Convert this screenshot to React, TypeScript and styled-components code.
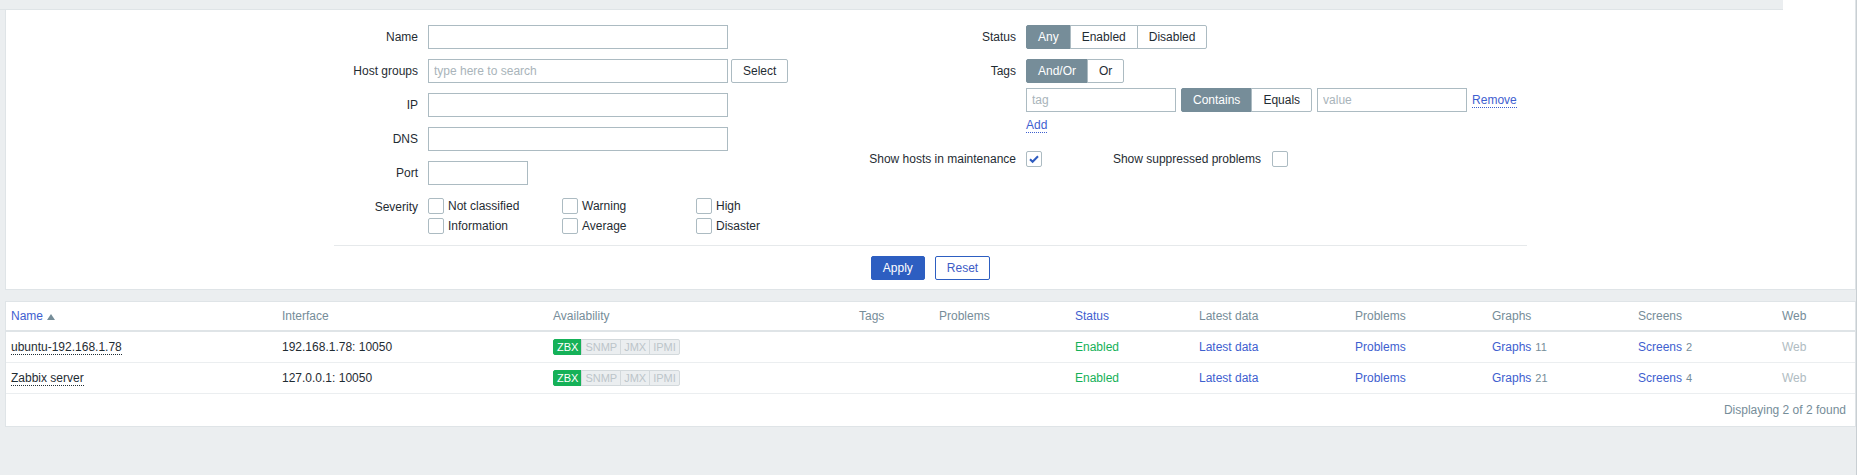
import { createGlobalStyle, styled } from "styled-components";

const GlobalStyle = createGlobalStyle`
  html, body { margin: 0; padding: 0; }
  body {
    font-family: "Liberation Sans", Arial, sans-serif;
    font-size: 12px;
    color: #1f2c33;
    background: #fff;
  }
  * { box-sizing: border-box; }
`;

const colors = {
  bg: "#ebeef0",
  border: "#dfe4e7",
  inputBorder: "#acbbc2",
  text: "#1f2c33",
  muted: "#768d99",
  link: "#3e60cf",
  apply: "#2d5ec1",
  green: "#15b158",
};

// layout shells
const Screen = styled.div`
  display: flex;
  width: 1868px;
  height: 475px;
  overflow: hidden;
  background: #fff;
`;
const Main = styled.main`
  width: 1856px;
  flex-shrink: 0;
  display: flex;
  flex-direction: column;
  background: ${colors.bg};
`;
const Gutter = styled.div`
  flex: 1;
  background: #fff;
  border-left: 1px solid #c9cfd3;
`;
const TopStrip = styled.div`
  display: flex;
  height: 10px;
`;
const TopBar = styled.div`
  width: 1783px;
  background: ${colors.bg};
  border-bottom: 1px solid ${colors.border};
`;
const TopFill = styled.div`
  flex: 1;
  background: #fff;
  border-right: 1px solid ${colors.border};
`;

// filter
const FilterPanel = styled.section`
  margin-left: 5px;
  padding: 15px 0 9px;
  background: #fff;
  border: 1px solid ${colors.border};
  border-top: 0;
`;
const FilterForm = styled.div`
  width: 1193px;
  margin: 0 auto;
  display: grid;
  grid-template-columns: 599px 594px;
  align-items: start;
  padding-bottom: 9px;
  border-bottom: 1px solid #e6e9eb;
`;
const FormColumn = styled.div<{ $labelW: number }>`
  display: grid;
  grid-template-columns: ${({ $labelW }) => $labelW}px 1fr;
  row-gap: 10px;
  align-items: start;
`;
const Label = styled.div`
  height: 24px;
  display: flex;
  align-items: center;
  justify-content: flex-end;
  padding-right: 10px;
  white-space: nowrap;
`;
const Field = styled.div`
  display: flex;
  align-items: center;
  min-height: 24px;
`;
const FieldStack = styled.div`
  display: flex;
  flex-direction: column;
  gap: 5px;
`;
const Row = styled.div`
  display: flex;
  align-items: center;
  gap: 5px;
`;
const TextInput = styled.input<{ $w?: number }>`
  width: ${({ $w }) => $w ?? 300}px;
  height: 24px;
  padding: 0 5px;
  border: 1px solid ${colors.inputBorder};
  border-radius: 0;
  font: inherit;
  color: ${colors.text};
  background: #fff;
  outline: none;
  &::placeholder { color: #a9b4ba; }
`;
const Button = styled.button<{ $variant?: "plain" | "primary" | "outline" }>`
  height: 24px;
  padding: 0 11px;
  font: inherit;
  line-height: 22px;
  border-radius: 2px;
  cursor: pointer;
  border: 1px solid ${({ $variant }) => ($variant && $variant !== "plain" ? colors.apply : colors.inputBorder)};
  background: ${({ $variant }) => ($variant === "primary" ? colors.apply : "#fff")};
  color: ${({ $variant }) => ($variant === "primary" ? "#fff" : $variant === "outline" ? "#3d5cc6" : colors.text)};
`;
const SelectButton = styled(Button)`
  margin-left: 3px;
`;
const Segmented = styled.div`
  display: inline-flex;
  height: 24px;
`;
const Segment = styled.span<{ $on?: boolean }>`
  display: flex;
  align-items: center;
  padding: 0 11px;
  border: 1px solid ${({ $on }) => ($on ? "#768d99" : colors.inputBorder)};
  margin-left: -1px;
  background: ${({ $on }) => ($on ? "#768d99" : "#fff")};
  color: ${({ $on }) => ($on ? "#fff" : colors.text)};
  &:first-child { margin-left: 0; border-radius: 2px 0 0 2px; }
  &:last-child { border-radius: 0 2px 2px 0; }
`;
const Link = styled.a<{ $dark?: boolean }>`
  color: ${({ $dark }) => ($dark ? colors.text : colors.link)};
  text-decoration: none;
  border-bottom: 1px dotted ${({ $dark }) => ($dark ? colors.text : colors.link)};
  cursor: pointer;
`;
const PlainLink = styled.a`
  color: ${colors.link};
  text-decoration: none;
`;
const AddRow = styled.div`
  height: 24px;
  margin-top: -4px;
  display: flex;
  align-items: center;
`;
const Box = styled.span`
  width: 16px;
  height: 16px;
  flex-shrink: 0;
  display: inline-flex;
  align-items: center;
  justify-content: center;
  border: 1px solid ${colors.inputBorder};
  border-radius: 2px;
  background: #fff;
`;
const SubLabel = styled.span`
  width: 230px;
  padding-right: 11px;
  text-align: right;
  white-space: nowrap;
`;
const SeverityGrid = styled.div`
  display: grid;
  grid-template-columns: repeat(3, 134px);
  grid-template-rows: repeat(2, 20px);
  grid-auto-flow: column;
  padding-top: 1px;
`;
const CheckItem = styled.label`
  display: flex;
  align-items: center;
  gap: 4px;
  white-space: nowrap;
`;
const ButtonBar = styled.div`
  display: flex;
  justify-content: center;
  gap: 10px;
  margin-top: 10px;
`;

// results table
const TablePanel = styled.section`
  margin: 11px 0 0 5px;
  background: #fff;
  border: 1px solid ${colors.border};
`;
const Table = styled.table`
  width: 100%;
  table-layout: fixed;
  border-collapse: collapse;
`;
const Th = styled.th<{ $link?: boolean }>`
  text-align: left;
  font-weight: normal;
  padding: 7px 5px;
  line-height: 14px;
  color: ${({ $link }) => ($link ? colors.link : colors.muted)};
  border-bottom: 2px solid ${colors.border};
  white-space: nowrap;
`;
const Td = styled.td`
  padding: 8px 5px;
  line-height: 14px;
  border-bottom: 1px solid ${colors.bg};
  white-space: nowrap;
`;
const StatusText = styled.span`
  color: ${colors.green};
`;
const Count = styled.span`
  margin-left: 4px;
  font-size: 11px;
  color: ${colors.muted};
`;
const Muted = styled.span`
  color: #b0bcc2;
`;
const BadgeGroup = styled.div`
  display: flex;
  align-items: center;
  height: 14px;
`;
const Badge = styled.span<{ $on?: boolean }>`
  height: 16px;
  padding: 0 3px;
  font-size: 11px;
  line-height: 14px;
  border: 1px solid ${({ $on }) => ($on ? colors.green : "#d3d9dc")};
  margin-left: -1px;
  background: ${({ $on }) => ($on ? colors.green : colors.bg)};
  color: ${({ $on }) => ($on ? "#fff" : "#bcc5ca")};
  &:first-child { margin-left: 0; border-radius: 2px 0 0 2px; }
  &:last-child { border-radius: 0 2px 2px 0; }
`;
const SortArrow = styled.svg`
  margin-left: 4px;
  vertical-align: 0;
`;
const Footer = styled.div`
  padding: 9px;
  line-height: 14px;
  text-align: right;
  color: ${colors.muted};
`;

const Checkbox = ({ checked }: { checked?: boolean }) => (
  <Box>
    {checked && (
      <svg width="12" height="12" viewBox="0 0 12 12">
        <path d="M2 6.2l2.6 2.6L10 3.2" fill="none" stroke="#2f5cc0" strokeWidth="2" />
      </svg>
    )}
  </Box>
);

const hosts = [
  { name: "ubuntu-192.168.1.78", iface: "192.168.1.78: 10050", graphs: 11, screens: 2 },
  { name: "Zabbix server", iface: "127.0.0.1: 10050", graphs: 21, screens: 4 },
];

const colWidths = [271, 271, 306, 80, 136, 124, 156, 137, 146, 144, 78];

export default function App() {
  return (
    <>
      <GlobalStyle />
      <Screen>
        <Main>
          <TopStrip>
            <TopBar />
            <TopFill />
          </TopStrip>

          <FilterPanel>
            <FilterForm>
              <FormColumn $labelW={94}>
                <Label>Name</Label>
                <Field><TextInput /></Field>
                <Label>Host groups</Label>
                <Field>
                  <TextInput placeholder="type here to search" />
                  <SelectButton type="button">Select</SelectButton>
                </Field>
                <Label>IP</Label>
                <Field><TextInput /></Field>
                <Label>DNS</Label>
                <Field><TextInput /></Field>
                <Label>Port</Label>
                <Field><TextInput $w={100} /></Field>
                <Label>Severity</Label>
                <SeverityGrid>
                  {["Not classified", "Information", "Warning", "Average", "High", "Disaster"].map((s) => (
                    <CheckItem key={s}>
                      <Checkbox />
                      {s}
                    </CheckItem>
                  ))}
                </SeverityGrid>
              </FormColumn>

              <FormColumn $labelW={93}>
                <Label>Status</Label>
                <Field>
                  <Segmented>
                    <Segment $on>Any</Segment>
                    <Segment>Enabled</Segment>
                    <Segment>Disabled</Segment>
                  </Segmented>
                </Field>
                <Label>Tags</Label>
                <FieldStack>
                  <Field>
                    <Segmented>
                      <Segment $on>And/Or</Segment>
                      <Segment>Or</Segment>
                    </Segmented>
                  </Field>
                  <Row>
                    <TextInput $w={150} placeholder="tag" />
                    <Segmented>
                      <Segment $on>Contains</Segment>
                      <Segment>Equals</Segment>
                    </Segmented>
                    <TextInput $w={150} placeholder="value" />
                    <Link>Remove</Link>
                  </Row>
                  <AddRow>
                    <Link>Add</Link>
                  </AddRow>
                </FieldStack>
                <Label>Show hosts in maintenance</Label>
                <Field>
                  <Checkbox checked />
                  <SubLabel>Show suppressed problems</SubLabel>
                  <Checkbox />
                </Field>
              </FormColumn>
            </FilterForm>
            <ButtonBar>
              <Button type="button" $variant="primary">Apply</Button>
              <Button type="button" $variant="outline">Reset</Button>
            </ButtonBar>
          </FilterPanel>

          <TablePanel>
            <Table>
              <colgroup>
                {colWidths.map((w, i) => (
                  <col key={i} style={{ width: w }} />
                ))}
              </colgroup>
              <thead>
                <tr>
                  <Th $link>
                    Name
                    <SortArrow width="8" height="6" viewBox="0 0 8 6">
                      <path d="M0 6L4 0l4 6z" fill="#768d99" />
                    </SortArrow>
                  </Th>
                  <Th>Interface</Th>
                  <Th>Availability</Th>
                  <Th>Tags</Th>
                  <Th>Problems</Th>
                  <Th $link>Status</Th>
                  <Th>Latest data</Th>
                  <Th>Problems</Th>
                  <Th>Graphs</Th>
                  <Th>Screens</Th>
                  <Th>Web</Th>
                </tr>
              </thead>
              <tbody>
                {hosts.map((h) => (
                  <tr key={h.name}>
                    <Td><Link $dark>{h.name}</Link></Td>
                    <Td>{h.iface}</Td>
                    <Td>
                      <BadgeGroup>
                        <Badge $on>ZBX</Badge>
                        <Badge>SNMP</Badge>
                        <Badge>JMX</Badge>
                        <Badge>IPMI</Badge>
                      </BadgeGroup>
                    </Td>
                    <Td />
                    <Td />
                    <Td><StatusText>Enabled</StatusText></Td>
                    <Td><PlainLink>Latest data</PlainLink></Td>
                    <Td><PlainLink>Problems</PlainLink></Td>
                    <Td><PlainLink>Graphs</PlainLink><Count>{h.graphs}</Count></Td>
                    <Td><PlainLink>Screens</PlainLink><Count>{h.screens}</Count></Td>
                    <Td><Muted>Web</Muted></Td>
                  </tr>
                ))}
              </tbody>
            </Table>
            <Footer>Displaying 2 of 2 found</Footer>
          </TablePanel>
        </Main>
        <Gutter />
      </Screen>
    </>
  );
}
